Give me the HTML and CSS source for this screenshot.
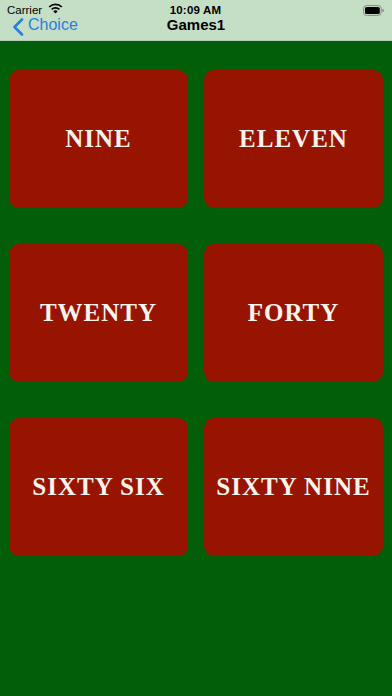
FILE: index.html
```html
<!DOCTYPE html>
<html>
<head>
<meta charset="utf-8">
<link rel="stylesheet" href="styles.css">
</head>
<body>
<header class="topbar">
  <div class="status">
    <div class="status-left">
      <span class="carrier">Carrier</span>
      <svg class="wifi" width="15" height="11" viewBox="0 0 15 11">
        <path d="M7.5 10.6 L5.3 8.2 A3.2 3.2 0 0 1 9.7 8.2 Z" fill="#000"/>
        <path d="M3.6 6.4 A5.6 5.6 0 0 1 11.4 6.4" fill="none" stroke="#000" stroke-width="1.7"/>
        <path d="M1.2 4 A9 9 0 0 1 13.8 4" fill="none" stroke="#000" stroke-width="1.7"/>
      </svg>
    </div>
    <span class="time">10:09 AM</span>
    <div class="status-right">
      <svg class="battery" width="21" height="11" viewBox="0 0 21 11">
        <rect x="0.6" y="0.6" width="17.6" height="9.8" rx="2.8" fill="none" stroke="#888" stroke-width="1"/>
        <rect x="2" y="2" width="14.8" height="7" rx="1.6" fill="#000"/>
        <path d="M19.3 3.8 a1.6 1.6 0 0 1 0 3.4 z" fill="#888"/>
      </svg>
    </div>
  </div>
  <div class="nav">
    <div class="back">
      <svg class="chev" width="12" height="18" viewBox="0 0 12 18">
        <path d="M10 1.5 L2.5 9 L10 16.5" fill="none" stroke="#2a7de1" stroke-width="2.6" stroke-linecap="round" stroke-linejoin="round"/>
      </svg>
      <span class="back-label">Choice</span>
    </div>
    <span class="title">Games1</span>
    <span></span>
  </div>
</header>
<main class="grid">
  <div class="card">NINE</div>
  <div class="card">ELEVEN</div>
  <div class="card">TWENTY</div>
  <div class="card">FORTY</div>
  <div class="card">SIXTY SIX</div>
  <div class="card">SIXTY NINE</div>
</main>
</body>
</html>
```
FILE: styles.css
```css
html, body {
  margin: 0;
  padding: 0;
}
body {
  width: 392px;
  height: 696px;
  background: #035e0a;
  font-family: "Liberation Sans", Arial, sans-serif;
  overflow: hidden;
}
.topbar {
  height: 41px;
  background: #c5dfc7;
  display: grid;
  box-sizing: border-box;
  border-bottom: 1px solid #b4cdb6;
}
.status, .nav {
  grid-area: 1 / 1;
  display: grid;
  grid-template-columns: 1fr auto 1fr;
  align-items: start;
}
.status {
  padding: 4px 8px 0 7px;
  font-size: 11.5px;
  line-height: 13px;
  color: #000;
}
.status-left {
  display: flex;
  align-items: flex-start;
  gap: 6px;
}
.wifi {
  margin-top: -1px;
}
.time {
  font-weight: 600;
  font-size: 11.5px;
  letter-spacing: 0.2px;
}
.status-right {
  display: flex;
  justify-content: flex-end;
  margin-top: 1px;
}
.nav {
  padding-top: 9px;
  align-items: center;
}
.back {
  display: flex;
  align-items: center;
  gap: 4px;
  padding-left: 12px;
  color: #2a7de1;
  font-size: 16px;
  line-height: 18px;
}
.chev {
  margin-top: 4px;
}
.title {
  font-weight: bold;
  font-size: 15px;
  line-height: 18px;
  color: #000;
}
.grid {
  display: grid;
  grid-template-columns: 179px 179px;
  grid-auto-rows: 138px;
  column-gap: 16px;
  row-gap: 36px;
  padding: 29px 9px 0 9px;
}
.card {
  background: #961400;
  border-radius: 10px;
  display: flex;
  align-items: center;
  justify-content: center;
  color: #fbf3ee;
  font-family: "Liberation Serif", "Times New Roman", serif;
  font-weight: bold;
  font-size: 25px;
  letter-spacing: 1px;
  white-space: nowrap;
}
```
